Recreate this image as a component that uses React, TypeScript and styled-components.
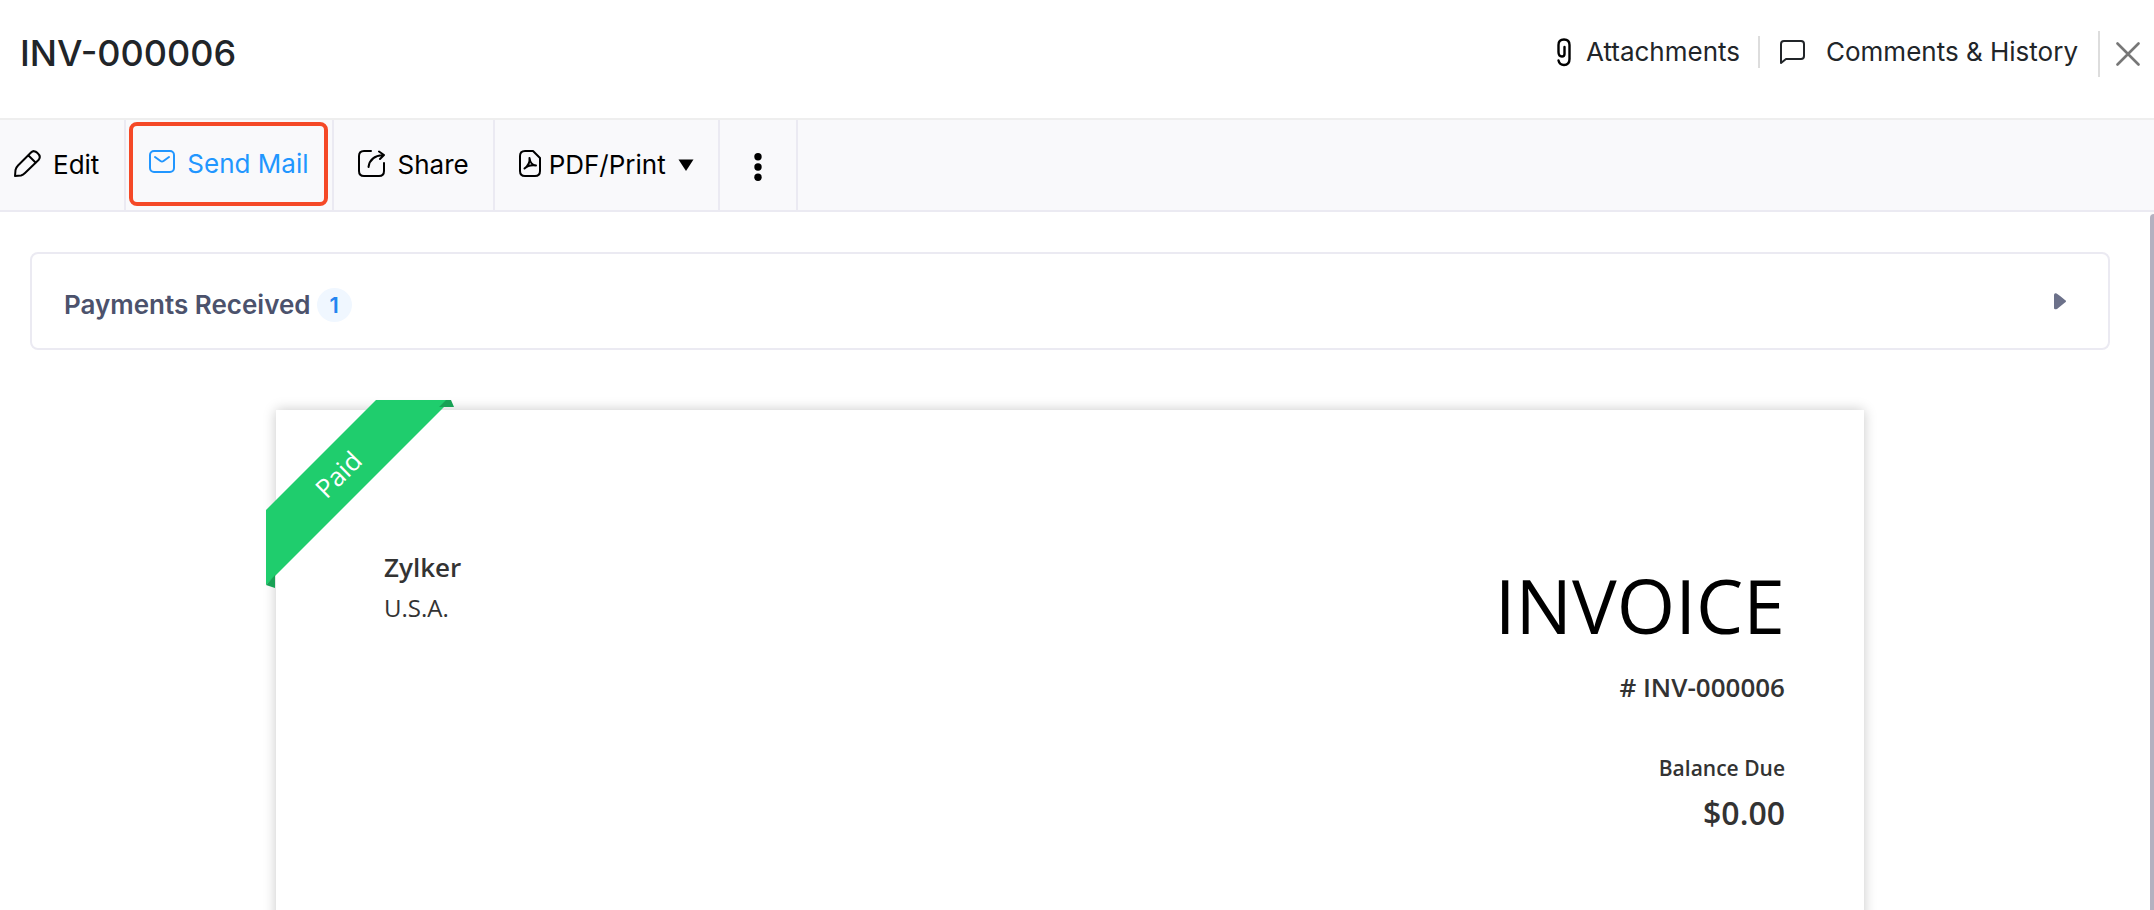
import React from 'react';
import styled, { createGlobalStyle, css } from 'styled-components';

const GlobalStyle = createGlobalStyle`
  *, *::before, *::after { box-sizing: border-box; }
  html { height: 100%; overflow: hidden; }
  body {
    margin: 0;
    height: 100%;
    overflow: hidden;
    background: #fff;
    color: #212529;
    font-family: Inter, "Liberation Sans", sans-serif;
    font-size: 26px;
    line-height: 36px;
  }
  #root { height: 100%; }
  h1, h2, h3, p { margin: 0; }
  button { font: inherit; color: inherit; background: none; border: 0; padding: 0; cursor: pointer; }
  svg { display: block; flex: none; }
`;

const Page = styled.div`
  display: flex;
  flex-direction: column;
  height: 100%;
`;

const Header = styled.header`
  display: flex;
  align-items: flex-start;
  justify-content: space-between;
  height: 120px;
  flex: none;
  padding-left: 20px;
  border-bottom: 2px solid #eee;
`;

const Title = styled.h1`
  margin-top: 30px;
  font-size: 36px;
  line-height: 46px;
  font-weight: 500;
`;

const HeaderActions = styled.div`
  display: flex;
  align-items: center;
  height: 46px;
  margin-top: 31px;
`;

const HeaderButton = styled.button<{ $gap: number }>`
  display: flex;
  align-items: center;
  gap: ${(p) => p.$gap}px;
  height: 42px;
  margin-bottom: 4px;
  white-space: nowrap;
`;

const Separator = styled.span<{ $tall?: boolean }>`
  width: 2px;
  height: ${(p) => (p.$tall ? 46 : 32)}px;
  margin: ${(p) => (p.$tall ? '0 16px 0 20px' : '0 20px 4px 18px')};
  background: #ddd;
`;

const CloseButton = styled.button`
  padding-right: 14px;
`;

const Toolbar = styled.nav`
  display: flex;
  flex: none;
  height: 92px;
  background: #f9f9fb;
  border-bottom: 2px solid #ebeaf2;
  color: #000;
`;

const ToolItem = styled.div<{ $framed?: boolean }>`
  display: flex;
  padding: ${(p) => (p.$framed ? '2px 4px 4px 3px' : '0')};
  border-right: 2px solid #ebeaf2;
`;

const ToolButton = styled.button<{ $highlighted?: boolean; $gap?: number; $pad?: string }>`
  display: flex;
  align-items: center;
  gap: ${(p) => p.$gap ?? 12}px;
  padding: ${(p) => p.$pad ?? '0 24px'};
  white-space: nowrap;
  ${(p) =>
    p.$highlighted &&
    css`
      padding: 0 16px;
      color: #2196ff;
      border: 4px solid #f54927;
      border-radius: 8px;
    `}
`;

const ToolIcon = styled.span<{ $drop?: boolean }>`
  ${(p) => (p.$drop ? 'padding-top: 4px;' : 'padding-bottom: 4px;')}
`;

const Caret = styled.span`
  margin-left: 4px;
`;

const Content = styled.main`
  flex: 1;
  min-height: 0;
  overflow: hidden;
  display: flex;
  justify-content: space-between;
`;

const Body = styled.div`
  flex: 1;
  min-width: 0;
  padding: 40px 40px 0 30px;
`;

const ScrollTrack = styled.div`
  width: 4px;
  padding-top: 2px;
  background: #fafafa;
  &::before {
    content: "";
    display: block;
    height: 100%;
    background: #b3b1c0;
    border-radius: 8px 0 0 0;
  }
`;

const PaymentsPanel = styled.button`
  display: flex;
  align-items: center;
  width: 100%;
  height: 98px;
  padding: 8px 42px 0 32px;
  border: 2px solid #ebeaf2;
  border-radius: 8px;
  color: #4c526c;
  font-weight: 600;
`;

const Count = styled.span`
  width: 35px;
  height: 34px;
  margin-left: 6px;
  border-radius: 50%;
  background: #f0f7ff;
  color: #2485f0;
  font-size: 22px;
  line-height: 34px;
`;

const Expand = styled.span`
  margin-left: auto;
  padding-bottom: 8px;
`;

const Sheet = styled.article`
  position: relative;
  display: flex;
  justify-content: space-between;
  min-height: 800px;
  margin: 60px 246px 0;
  padding: 137px 79px 0 108px;
  background: #fff;
  box-shadow: 0 0 12px rgba(0, 0, 0, 0.22);
  color: #333;
  font-family: "Open Sans", "Noto Sans", sans-serif;
`;

const Ribbon = styled.div`
  position: absolute;
  top: -10px;
  left: -10px;
  width: 188px;
  height: 188px;
`;

const RibbonLabel = styled.span`
  position: absolute;
  left: 32px;
  top: 56px;
  width: 80px;
  text-align: center;
  transform: rotate(-45deg);
  color: #fff;
  font-size: 26px;
`;

const Organization = styled.h2`
  font-size: 26px;
  line-height: 40px;
  font-weight: 600;
`;

const Country = styled.p`
  font-size: 24px;
  line-height: 42px;
`;

const Summary = styled.section`
  text-align: right;
`;

const InvoiceHeading = styled.h2`
  margin-top: 6px;
  color: #000;
  font-size: 75px;
  line-height: 104px;
  font-weight: 400;
`;

const InvoiceNumber = styled.p`
  margin-top: 12px;
  font-size: 26px;
  font-weight: 600;
`;

const BalanceLabel = styled.p`
  margin-top: 45px;
  font-size: 21px;
  font-weight: 600;
`;

const Balance = styled.p`
  margin-top: 5px;
  font-size: 32px;
  line-height: 44px;
  font-weight: 600;
`;

const line = {
  fill: 'none',
  stroke: 'currentColor',
  strokeWidth: 2,
  strokeLinecap: 'round' as const,
  strokeLinejoin: 'round' as const,
  'aria-hidden': true,
};

const PencilIcon = () => (
  <svg width="27" height="27" viewBox="0 0 27 27" {...line}>
    <path d="M1 26 L1.500 20 Q2 17.500 4 15.500 L17 2.500 Q20 -0.500 23.500 3 Q27.500 6.500 24.500 10 L11 23 Q9 25 7 25.500 Z" />
    <path d="M14.500 5.500 L21.500 12.500" />
  </svg>
);

const MailIcon = () => (
  <svg width="26" height="24" viewBox="0 0 26 24" {...line}>
    <rect x="1" y="1" width="24" height="21" rx="4" />
    <path d="M6 7 L11.500 11 Q13 12 14.500 11 L20 7" />
  </svg>
);

const ShareIcon = () => (
  <svg width="27" height="27" viewBox="0 0 27 27" {...line}>
    <path d="M13 1 H6 Q1 1 1 6 V21 Q1 26 6 26 H21 Q26 26 26 21 V13" />
    <path d="M10.500 17 Q12 6 25 5 M21 1.500 L26 5 L22 9" />
  </svg>
);

const PdfIcon = () => (
  <svg width="22" height="27" viewBox="0 0 22 27" {...line}>
    <path d="M6 1 H14 L21 8 V21 Q21 26 16 26 H6 Q1 26 1 21 V6 Q1 1 6 1 Z" />
    <path d="M10.500 8 C11 12 13 15 17 15.500 C13 15 8 16 5.500 18.500 C9 16 11 12 10.500 8 Z" />
  </svg>
);

const CaretIcon = () => (
  <svg width="16" height="12" viewBox="0 0 16 12" aria-hidden="true">
    <path d="M0.500 0.500 H15.500 L8 12 Z" fill="currentColor" />
  </svg>
);

const MoreIcon = () => (
  <svg width="8" height="28" viewBox="0 0 8 28" fill="currentColor" aria-hidden="true">
    <circle cx="4" cy="3.700" r="3.700" />
    <circle cx="4" cy="14" r="3.700" />
    <circle cx="4" cy="24.300" r="3.700" />
  </svg>
);

const ClipIcon = () => (
  <svg width="14" height="29" viewBox="0 0 14 29" {...line} stroke="#000" strokeWidth={2.4}>
    <path d="M7.500 9 V16 Q7.500 18.500 5 18.500 Q1.500 18.500 1.500 14 V7 Q1.500 1.500 7 1.500 Q12.500 1.500 12.500 7 V21 Q12.500 27 7 27 Q2.500 27 1.500 22.500" />
  </svg>
);

const CommentIcon = () => (
  <svg width="25" height="24" viewBox="0 0 25 24" {...line}>
    <path d="M1 23 V4 Q1 1 4 1 H21 Q24 1 24 4 V16 Q24 19 21 19 H6 Z" />
  </svg>
);

const CloseIcon = () => (
  <svg width="24" height="24" viewBox="0 0 24 24" {...line} stroke="#777" strokeWidth={2.6}>
    <path d="M1.500 1.500 L22.500 22.500 M22.500 1.500 L1.500 22.500" />
  </svg>
);

const PlayIcon = () => (
  <svg width="13" height="17" viewBox="0 0 13 17" aria-hidden="true">
    <path d="M1 2 Q1 0 3 0.300 Q4 0.500 12 7 Q14 8 12 9.500 L4 16 Q1 17 1 15 Z" fill="#6c718a" />
  </svg>
);

const RibbonShape = () => (
  <svg width="188" height="188" viewBox="0 0 188 188" aria-hidden="true">
    <path d="M110 0 H185 L0 185 V110 Z" fill="#1fcd6d" />
    <path d="M173 7 L180 0 H185 L188 7 Z M0 185 L9 175 V188 Z" fill="#18a155" />
  </svg>
);

export default function App() {
  return (
    <Page>
      <GlobalStyle />
      <Header>
        <Title>INV-000006</Title>
        <HeaderActions>
          <HeaderButton $gap={15}><ClipIcon />Attachments</HeaderButton>
          <Separator />
          <HeaderButton $gap={21}><CommentIcon />Comments &amp; History</HeaderButton>
          <Separator $tall />
          <CloseButton aria-label="Close"><CloseIcon /></CloseButton>
        </HeaderActions>
      </Header>
      <Toolbar aria-label="Invoice actions">
        <ToolItem>
          <ToolButton $pad="0 25px 0 14px"><ToolIcon><PencilIcon /></ToolIcon>Edit</ToolButton>
        </ToolItem>
        <ToolItem $framed>
          <ToolButton $highlighted><ToolIcon><MailIcon /></ToolIcon>Send Mail</ToolButton>
        </ToolItem>
        <ToolItem>
          <ToolButton><ToolIcon><ShareIcon /></ToolIcon>Share</ToolButton>
        </ToolItem>
        <ToolItem>
          <ToolButton $gap={8}>
            <ToolIcon><PdfIcon /></ToolIcon>PDF/Print<Caret><CaretIcon /></Caret>
          </ToolButton>
        </ToolItem>
        <ToolItem>
          <ToolButton $pad="0 34px" aria-label="More actions"><ToolIcon $drop><MoreIcon /></ToolIcon></ToolButton>
        </ToolItem>
      </Toolbar>
      <Content>
        <Body>
          <PaymentsPanel aria-expanded="false">
            Payments Received
            <Count>1</Count>
            <Expand><PlayIcon /></Expand>
          </PaymentsPanel>
          <Sheet>
            <Ribbon>
              <RibbonShape />
              <RibbonLabel>Paid</RibbonLabel>
            </Ribbon>
            <section>
              <Organization>Zylker</Organization>
              <Country>U.S.A.</Country>
            </section>
            <Summary>
              <InvoiceHeading>INVOICE</InvoiceHeading>
              <InvoiceNumber># INV-000006</InvoiceNumber>
              <BalanceLabel>Balance Due</BalanceLabel>
              <Balance>$0.00</Balance>
            </Summary>
          </Sheet>
        </Body>
        <ScrollTrack />
      </Content>
    </Page>
  );
}
